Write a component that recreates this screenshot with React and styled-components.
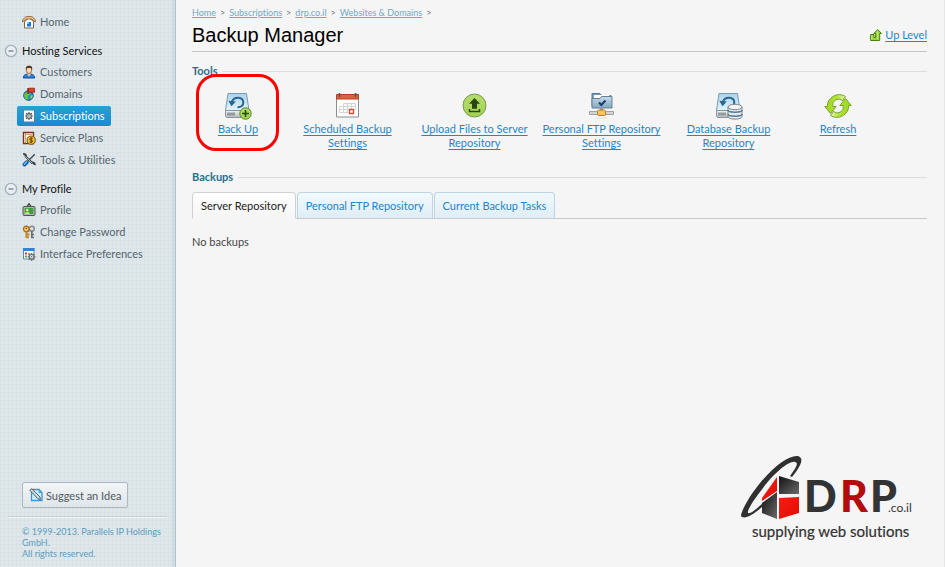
import React, { useState } from "react";
import styled, { createGlobalStyle } from "styled-components";

const GlobalStyle = createGlobalStyle`
  * {
    box-sizing: border-box;
  }

  body {
    margin: 0;
    background: #f5f5f5;
    color: #444;
    font-family: "Lato", "Liberation Sans", sans-serif;
    font-size: 11px;
    font-variant-ligatures: none;
    line-height: 14px;
  }

  button {
    font-family: inherit;
    font-size: 11px;
    cursor: pointer;
  }
`;

const Page = styled.div`
  display: flex;
  min-height: 100vh;
  border-right: 1px solid #e6e6e6;
`;

const Sidebar = styled.aside`
  display: flex;
  flex-direction: column;
  flex: 0 0 176px;
  border-right: 1px solid #b3c1c9;
  background-color: #dfe7ea;
  background-image:
    linear-gradient(to right, rgba(190, 204, 212, 0) 97%, rgba(180, 196, 205, 0.4)),
    repeating-linear-gradient(to right, rgba(190, 206, 214, 0.16) 0 1px, transparent 1px 4px),
    repeating-linear-gradient(to bottom, rgba(190, 206, 214, 0.16) 0 1px, transparent 1px 4px);
`;

const Nav = styled.nav`
  flex: 1;
  padding: 11px 8px 0 0;
`;

const NavGroup = styled.section`
  margin-bottom: 8px;
`;

const NavHeader = styled.h2`
  display: flex;
  align-items: center;
  gap: 4px;
  height: 20px;
  margin: 0;
  padding-left: 4px;
  color: #111;
  font-size: 11px;
  font-weight: 400;
`;

const Toggle = styled.button`
  display: flex;
  padding: 0;
  border: 0;
  background: none;
`;

const NavList = styled.ul`
  margin: 0;
  padding: 0 0 0 17px;
  list-style: none;
`;

const NavItem = styled.li`
  display: flex;
  height: 22px;
  align-items: center;
`;

const NavLink = styled.a`
  display: flex;
  align-items: center;
  gap: 4px;
  height: 20px;
  padding: 0 6px 0 5px;
  border-radius: 2px;
  background: ${(props) => (props.$active ? "linear-gradient(#27a0d8, #1a8cc8)" : "none")};
  color: ${(props) => (props.$active ? "#fff" : "#56656f")};
  text-decoration: none;
`;

const SidebarBottom = styled.footer`
  padding: 0 8px 8px;
  color: #5c9cbf;
  font-size: 9px;
  line-height: 11px;
`;

const SuggestButton = styled.button`
  display: flex;
  align-items: center;
  gap: 3px;
  height: 26px;
  margin: 0 0 8px 14px;
  padding: 0 6px;
  border: 1px solid #aeb9bf;
  border-radius: 2px;
  background: linear-gradient(#f2f5f7, #dfe5e9);
  color: #505a61;
`;

const Copyright = styled.p`
  margin: 0;
  padding: 9px 0 0 14px;
  border-top: 1px solid #c3cfd5;
  box-shadow: inset 0 1px #f0f4f6;
`;

const Main = styled.main`
  display: flex;
  flex-direction: column;
  flex: 1;
  padding: 7px 17px 24px 16px;
`;

const Breadcrumbs = styled.nav`
  display: flex;
  gap: 4px;
  color: #777;
  font-size: 9px;
  line-height: 12px;

  a {
    color: #71a9c4;
  }
`;

const TitleBar = styled.header`
  display: flex;
  align-items: center;
  justify-content: space-between;
  height: 33px;
  border-bottom: 1px solid #c6c6c6;
`;

const Title = styled.h1`
  margin: 0;
  color: #000;
  font-family: "Liberation Sans", sans-serif;
  font-size: 20px;
  font-weight: 400;
  line-height: 24px;
`;

const UpLevel = styled.a`
  display: flex;
  align-items: center;
  gap: 3px;
  color: #2585c7;
  text-underline-offset: 2px;
`;

const Section = styled.section`
  margin-top: ${(props) => props.$gap};
`;

const SectionTitle = styled.h2`
  display: flex;
  align-items: center;
  gap: 5px;
  margin: 0;
  color: #2a6e91;
  font-size: 11px;
  font-weight: 700;
  line-height: 14px;

  &::after {
    content: "";
    flex: 1;
    border-top: 1px solid #dcdfe0;
  }
`;

const ToolList = styled.div`
  display: flex;
  flex-wrap: wrap;
  margin-top: 14px;
`;

const Tool = styled.a`
  position: relative;
  display: flex;
  flex-direction: column;
  align-items: center;
  gap: 2px;
  width: ${(props) => (props.$narrow ? "92px" : "127px")};
  padding: 0 3px;
  color: #2585c7;
  text-align: center;
  text-underline-offset: 2px;
`;

const Highlight = styled.span`
  position: absolute;
  top: -18px;
  left: 4px;
  width: 83px;
  height: 77px;
  border: 3px solid #f00;
  border-radius: 20px;
`;

const Tabs = styled.div`
  display: flex;
  gap: 1px;
  margin-top: 8px;
  border-bottom: 1px solid #c6cacc;
`;

const Tab = styled.button`
  height: 27px;
  margin-bottom: -1px;
  padding: 0 8px;
  border: 1px solid ${(props) => (props.$active ? "#cfd2d3" : "#bdd5e2")};
  border-bottom-color: ${(props) => (props.$active ? "#f5f5f5" : "#c6cacc")};
  border-radius: 4px 4px 0 0;
  background: ${(props) => (props.$active ? "linear-gradient(#fff, #f5f5f5)" : "linear-gradient(#f1f9fe, #e0edf5)")};
  color: ${(props) => (props.$active ? "#222" : "#2585c7")};
`;

const Empty = styled.p`
  margin: 16px 0 0;
`;

const Brand = styled.svg`
  align-self: flex-end;
  margin: auto 8px 0 0;
`;

const SmallIcon = ({ children }) => (
  <svg width="14" height="14" viewBox="0 0 14 14" fill="none" aria-hidden="true">
    {children}
  </svg>
);

const HomeIcon = () => (
  <SmallIcon>
    <path d="M2.500 6.500V13h9V6.500L7 3z" fill="#fff" stroke="#756653" />
    <path d="M.7 7V4.700L4.200 1.500h5.600l3.500 3.200V7L9.500 4h-5z" fill="#edc28c" stroke="#91653b" strokeWidth=".9" />
    <path d="M5 7h4v4.500H5z" fill="#1677e5" />
    <path d="M5 7h2v2H5z" fill="#82c4ff" />
  </SmallIcon>
);

const CustomerIcon = () => (
  <SmallIcon>
    <path d="M1.300 13c0-2.500 1.500-3.500 3.700-4h4c2.200.5 3.700 1.500 3.700 4z" fill="#2d7fdb" stroke="#164b94" />
    <path d="M5.500 8h3v2L7 11.500 5.500 10z" fill="#f3cba5" />
    <ellipse cx="7" cy="5" rx="2.700" ry="3.500" fill="#f9d8b5" stroke="#754623" strokeWidth=".7" />
    <path d="M4 5C3.300 1.800 5 .6 7.200.7 10 .7 10.700 2.500 10 5L9 3H5z" fill="#56321f" />
  </SmallIcon>
);

const DomainIcon = () => (
  <SmallIcon>
    <circle cx="6.500" cy="8.500" r="4.800" fill="#2484d1" stroke="#164b80" />
    <path d="M2 7.500l2.500-2.700 3 1 .5 2-2 1.500.8 2.500-2 1C3 12.500 2 10 2 7.500z" fill="#58c941" />
    <path d="M8.500 9l2-1.500v3l-2 1.800z" fill="#84df57" />
    <path d="M6 7V1" stroke="#702510" strokeWidth="1.300" />
    <path d="M6.500 1.200h6v4h-6z" fill="#df402a" stroke="#9a2012" strokeWidth=".8" />
  </SmallIcon>
);

const GearShape = ({ x, y, color }) => (
  <g transform={`translate(${x} ${y})`} stroke={color}>
    <circle r="2.300" fill="#eee" strokeWidth="1.200" />
    <circle r=".8" fill={color} stroke="none" />
    <path d="M0-2.800V-3.900M0 2.800V3.900M-2.800 0H-3.900M2.800 0H3.900M-2-2l-.8-.8M2-2l.8-.8M-2 2l-.8.8M2 2l.8.8" strokeWidth="1.200" />
  </g>
);

const SubscriptionIcon = () => (
  <SmallIcon>
    <path d="M1.500 1h11v12h-11z" fill="#f5f7f8" stroke="#4f84a8" />
    <GearShape x={7} y={7} color="#565c62" />
  </SmallIcon>
);

const PlanIcon = () => (
  <SmallIcon>
    <path d="M1.500 1.500h10v11h-10z" fill="#fff5df" stroke="#733719" strokeWidth="1.400" />
    <path d="M3.500 2v10M3.500 3.500h7" stroke="#bf9370" strokeWidth=".8" />
    <circle cx="9.200" cy="9.200" r="4.100" fill="#f4bf2c" stroke="#755019" />
    <path d="M10.800 7.500c-2-1-3.200-.3-3.100.6.1 1.300 3 .8 3 2.100 0 1.100-1.500 1.500-3.200.6M9.200 6.400v5.600" stroke="#5d3910" />
  </SmallIcon>
);

const ToolsIcon = () => (
  <SmallIcon>
    <path d="M12.800 1.200L5 9" stroke="#444" strokeWidth="1.300" />
    <path d="M1.200 1.200c1.400-.4 3 .7 2.700 2.500l6 6c1.600-.4 3 .8 2.800 2.500" stroke="#3e464b" strokeWidth="2.200" />
    <path d="M3.300 3.300l7 7" stroke="#d7dde0" strokeWidth=".7" />
    <path d="M4.700 9.300L2.500 11.500" stroke="#1a5fae" strokeWidth="4" strokeLinecap="round" />
    <path d="M4.500 9.100L2.300 11.200" stroke="#68b8f3" strokeWidth="1.500" strokeLinecap="round" />
  </SmallIcon>
);

const ProfileIcon = () => (
  <SmallIcon>
    <path d="M5 3.500L7 .7l2 2.800" stroke="#444" strokeWidth="1.300" />
    <rect x="1" y="3.500" width="12" height="9" rx="1" fill="#b0b8ac" stroke="#4b5948" />
    <path d="M2.700 5h8.600v6H2.700z" fill="#35a342" />
    <circle cx="5.300" cy="7" r="1.300" fill="#ffe7aa" />
    <path d="M3 11c.2-3 4.300-3 4.700 0z" fill="#a9ed75" />
  </SmallIcon>
);

const KeysIcon = () => (
  <SmallIcon>
    <circle cx="9.800" cy="3.800" r="2.500" fill="#ddd" stroke="#85898c" strokeWidth="1.400" />
    <path d="M9.800 6v7M9.500 9.500H12M9.500 12.500H12" stroke="#686c70" strokeWidth="1.600" />
    <circle cx="4.300" cy="4" r="2.800" fill="#ffd37a" stroke="#ad6d16" strokeWidth="1.400" />
    <circle cx="4.300" cy="3.500" r=".8" fill="#6a3d04" />
    <path d="M4.500 6.500V13M4.500 9.500h3M4.500 12.200h2.500" stroke="#c58425" strokeWidth="2" />
  </SmallIcon>
);

const InterfaceIcon = () => (
  <SmallIcon>
    <path d="M1.500 1.500h10.500v10.500H1.500z" fill="#fff" stroke="#5b88ac" />
    <path d="M1 1h11.500v3H1z" fill="#3583d0" />
    <path d="M3 5.500h2v2H3z" fill="#dd382a" />
    <path d="M6 5.500h2v2H6z" fill="#e8ad22" />
    <path d="M3 8.500h2v2H3z" fill="#41ad3e" />
    <circle cx="9.600" cy="9.800" r="3.600" fill="#b9bfc3" />
    <GearShape x={9.6} y={9.8} color="#60686e" />
  </SmallIcon>
);

const IdeaIcon = () => (
  <svg width="14" height="14" viewBox="0 0 14 14" fill="none" aria-hidden="true">
    <path d="M2.500 1.500h7.500l3 3v8h-10.500z" fill="#d2effc" stroke="#3e97cc" strokeWidth="1.300" />
    <path d="M10 1.500v3h3" stroke="#3e97cc" />
    <path d="M.8 2.200l2-1.400 8.200 8.200.4 2.500-2.500-.7z" fill="#d5d8d9" stroke="#4c5357" strokeWidth=".9" />
  </svg>
);

const CollapseIcon = () => (
  <svg width="14" height="14" viewBox="0 0 14 14" fill="none" aria-hidden="true">
    <circle cx="7" cy="7" r="5.600" fill="#e8eef1" stroke="#a5b3ba" strokeWidth="1.400" />
    <path d="M4.500 7h5" stroke="#69767e" strokeWidth="1.200" />
  </svg>
);

const UpIcon = () => (
  <svg width="12" height="12" viewBox="0 0 12 12" aria-hidden="true">
    <path d="M.6 5.500H4V8.500h1.700V4.500H3.800L7.700.6l3.800 3.900H9.700v7H.6z" fill="#9ad438" stroke="#4c7d14" />
    <path d="M1.700 6.500v4M7.700 2v8" fill="none" stroke="#c9ed83" />
  </svg>
);

const DiskShape = () => (
  <>
    <path d="M4 1.500h18.500l2.500 17H1.500z" fill="url(#diskTop)" stroke="#789bb1" />
    <path d="M1.500 18.500H25v5.300c0 1-.6 1.700-1.500 1.700H3c-.9 0-1.500-.6-1.500-1.700z" fill="url(#diskFront)" stroke="#8a9499" />
    <path d="M4 20.500v3M6 20.500v3M8 20.500v3M10 20.500v3" stroke="#566067" />
    <path d="M8 9.500c2.300-5.400 11-4.800 11.300.7.200 3.300-2.500 5.300-5.800 5.100" fill="none" stroke="#28658f" strokeWidth="2" />
    <path d="M4.300 8.800l7.500.7-4.300 4.700z" fill="#28658f" />
  </>
);

const Gradients = () => (
  <svg width="0" height="0" style={{ position: "absolute" }} aria-hidden="true">
    <defs>
      <linearGradient id="diskTop" x2="0" y2="1">
        <stop stopColor="#a9d3ec" />
        <stop offset="1" stopColor="#e4f4fc" />
      </linearGradient>
      <linearGradient id="diskFront" x2="0" y2="1">
        <stop stopColor="#f2f2f2" />
        <stop offset="1" stopColor="#b3babd" />
      </linearGradient>
      <linearGradient id="green" x2="0" y2="1">
        <stop stopColor="#b5dc70" />
        <stop offset="1" stopColor="#a2d450" />
      </linearGradient>
      <linearGradient id="folder" x2="0" y2="1">
        <stop stopColor="#c4daea" />
        <stop offset="1" stopColor="#86a8c1" />
      </linearGradient>
      <linearGradient id="arrowFade" x2="1" y2="0">
        <stop stopColor="#9bd61c" />
        <stop offset=".6" stopColor="#b3e236" />
        <stop offset="1" stopColor="#e6f6bd" />
      </linearGradient>
      <linearGradient id="cubeBlack" x2="1" y2="1">
        <stop stopColor="#111" />
        <stop offset="1" stopColor="#6a6a6a" />
      </linearGradient>
      <linearGradient id="cubeRed" x2="1" y2="1">
        <stop stopColor="#fa1c13" />
        <stop offset="1" stopColor="#e00c06" />
      </linearGradient>
    </defs>
  </svg>
);

const ToolIcon = ({ children }) => (
  <svg width="28" height="28" viewBox="0 0 28 28" fill="none" aria-hidden="true">
    {children}
  </svg>
);

const BackupIcon = () => (
  <ToolIcon>
    <DiskShape />
    <circle cx="21.500" cy="21.500" r="5.700" fill="url(#green)" stroke="#578421" />
    <path d="M21.500 18v7M18 21.500h7" stroke="#294d0a" strokeWidth="1.700" />
  </ToolIcon>
);

const CalendarIcon = () => (
  <ToolIcon>
    <path d="M2.500 5h22v20h-22z" fill="#fff" stroke="#8c8e8f" />
    <path d="M2.500 2.500h22v4.500h-22z" fill="#df6040" stroke="#ae4026" />
    <path d="M5.500 1v4M21.500 1v4" stroke="#72463a" strokeWidth="1.500" />
    <path d="M9.500 11.500h12M5.500 14.500h16M5.500 17.500h16M5.500 20.500h12M5.500 14.500v6M9.500 11.500v9M13.500 11.500v9M17.500 11.500v9M21.500 11.500v6" stroke="#d3d6d7" />
    <path d="M15.500 17.500h4v4h-4z" fill="#fff" stroke="#d44b31" strokeWidth="1.300" />
  </ToolIcon>
);

const UploadIcon = () => (
  <ToolIcon>
    <circle cx="13.500" cy="13.500" r="11.500" fill="url(#green)" stroke="#7b9a50" />
    <path d="M13.500 6L19 11.700h-3v5h-5v-5H8z" fill="#2b4414" />
    <path d="M8.500 17v2.500h10V17" stroke="#2b4414" strokeWidth="1.500" />
  </ToolIcon>
);

const FtpIcon = () => (
  <ToolIcon>
    <path d="M4 14V1.500h8l1.500 2h9.500V15z" fill="#799db7" stroke="#587990" />
    <path d="M6 3h15.500v7H6z" fill="#fff" />
    <path d="M4 6.500h8l1.500-2h10.500V16H4z" fill="url(#folder)" stroke="#628299" />
    <path d="M11 10.500l2.300 2.500L17.500 8.500" stroke="#183e6b" strokeWidth="2" />
    <path d="M13.500 16.500v4" stroke="#888" strokeWidth="3" />
    <path d="M1.500 19.500h24v3h-24z" fill="#d2d4d5" stroke="#8b9093" strokeWidth=".8" />
    <rect x="9.500" y="18" width="8" height="5.500" rx="1.500" fill="#ffc561" stroke="#be7d26" />
    <path d="M8 26h11" stroke="#ddd" />
  </ToolIcon>
);

const DatabaseIcon = () => (
  <ToolIcon>
    <DiskShape />
    <path d="M13 15v9.500c0 3.500 14 3.500 14 0V15z" fill="#e5e9eb" stroke="#7c878e" />
    <path d="M13 18c0 3 14 3 14 0M13 22c0 3 14 3 14 0" stroke="#557b95" strokeWidth="1.600" />
    <ellipse cx="20" cy="15" rx="7" ry="2.700" fill="#f4f5f6" stroke="#7c878e" />
  </ToolIcon>
);

const RefreshArrow = () => (
  <path d="M21.500 4.500A12 12 0 0 0 3.200 14.500H.8L6.500 21.500 12.200 14.500H8.800A6 6 0 0 1 18.500 8.500z" fill="url(#arrowFade)" stroke="#6d9a22" strokeWidth=".9" />
);

const RefreshIcon = () => (
  <ToolIcon>
    <RefreshArrow />
    <g transform="rotate(180 14 14)">
      <RefreshArrow />
    </g>
  </ToolIcon>
);

const BrandLogo = () => (
  <Brand width="180" height="88" viewBox="0 0 180 88" role="img" aria-label="DRP.co.il supplying web solutions">
    <path
      d="M2 61C2 56 11 40 21 28C36 10 50 0 59 1C65 3 63 10 53 22L51 21C57 13 60 8 56 7C51 5 36 17 24 33C14 46 8 55 9 58C12 59 17 54 23 49L23 52C14 60 5 65 2 61Z"
      fill="#303030"
    />
    <path d="M38 22V36L23 46V43z" fill="url(#cubeRed)" />
    <path d="M40 21l20 6v12H40z" fill="url(#cubeBlack)" />
    <path d="M38 37v27l-15-6V48z" fill="url(#cubeBlack)" />
    <path d="M40 43l20-1v16l-20 6z" fill="url(#cubeRed)" />
    <g fontFamily="Lato, sans-serif" fill="#333">
      <text x="65" y="57" fontSize="43" fontWeight="900">D</text>
      <text x="101" y="57" fontSize="43" fontWeight="900" fill="#b30c0c">R</text>
      <text x="131" y="57" fontSize="43" fontWeight="900">P</text>
      <text x="149" y="57" fontSize="12">.co.il</text>
      <text x="13" y="82" fontSize="15" stroke="#333" strokeWidth=".2">supplying web solutions</text>
    </g>
  </Brand>
);

const hostingLinks = [
  { label: "Customers", Icon: CustomerIcon },
  { label: "Domains", Icon: DomainIcon },
  { label: "Subscriptions", Icon: SubscriptionIcon, active: true },
  { label: "Service Plans", Icon: PlanIcon },
  { label: "Tools & Utilities", Icon: ToolsIcon },
];

const profileLinks = [
  { label: "Profile", Icon: ProfileIcon },
  { label: "Change Password", Icon: KeysIcon },
  { label: "Interface Preferences", Icon: InterfaceIcon },
];

const tools = [
  { label: "Back Up", Icon: BackupIcon, narrow: true, highlight: true },
  { label: "Scheduled Backup Settings", Icon: CalendarIcon },
  { label: "Upload Files to Server Repository", Icon: UploadIcon },
  { label: "Personal FTP Repository Settings", Icon: FtpIcon },
  { label: "Database Backup Repository", Icon: DatabaseIcon },
  { label: "Refresh", Icon: RefreshIcon, narrow: true },
];

const crumbs = ["Home", "Subscriptions", "drp.co.il", "Websites & Domains"];
const tabs = ["Server Repository", "Personal FTP Repository", "Current Backup Tasks"];

function NavLinks({ links }) {
  return (
    <NavList>
      {links.map(({ label, Icon, active }) => (
        <NavItem key={label}>
          <NavLink href="#" $active={active}>
            <Icon />
            {label}
          </NavLink>
        </NavItem>
      ))}
    </NavList>
  );
}

function CollapsibleGroup({ title, links }) {
  const [open, setOpen] = useState(true);

  return (
    <NavGroup>
      <NavHeader>
        <Toggle aria-label={title} aria-expanded={open} onClick={() => setOpen(!open)}>
          <CollapseIcon />
        </Toggle>
        {title}
      </NavHeader>
      {open && <NavLinks links={links} />}
    </NavGroup>
  );
}

function App() {
  const [activeTab, setActiveTab] = useState(tabs[0]);

  return (
    <>
      <GlobalStyle />
      <Gradients />
      <Page>
        <Sidebar>
          <Nav>
            <NavGroup>
              <NavLinks links={[{ label: "Home", Icon: HomeIcon }]} />
            </NavGroup>
            <CollapsibleGroup title="Hosting Services" links={hostingLinks} />
            <CollapsibleGroup title="My Profile" links={profileLinks} />
          </Nav>
          <SidebarBottom>
            <SuggestButton>
              <IdeaIcon />
              Suggest an Idea
            </SuggestButton>
            <Copyright>
              © 1999-2013. Parallels IP Holdings GmbH.
              <br />
              All rights reserved.
            </Copyright>
          </SidebarBottom>
        </Sidebar>

        <Main>
          <Breadcrumbs>
            {crumbs.map((crumb) => (
              <React.Fragment key={crumb}>
                <a href="#">{crumb}</a>
                <span>&gt;</span>
              </React.Fragment>
            ))}
          </Breadcrumbs>
          <TitleBar>
            <Title>Backup Manager</Title>
            <UpLevel href="#">
              <UpIcon />
              Up Level
            </UpLevel>
          </TitleBar>

          <Section $gap="12px">
            <SectionTitle>Tools</SectionTitle>
            <ToolList>
              {tools.map(({ label, Icon, narrow, highlight }) => (
                <Tool key={label} href="#" $narrow={narrow}>
                  {highlight && <Highlight />}
                  <Icon />
                  {label}
                </Tool>
              ))}
            </ToolList>
          </Section>

          <Section $gap="20px">
            <SectionTitle>Backups</SectionTitle>
            <Tabs role="tablist">
              {tabs.map((tab) => (
                <Tab
                  key={tab}
                  role="tab"
                  aria-selected={tab === activeTab}
                  $active={tab === activeTab}
                  onClick={() => setActiveTab(tab)}
                >
                  {tab}
                </Tab>
              ))}
            </Tabs>
            <Empty>No backups</Empty>
          </Section>

          <BrandLogo />
        </Main>
      </Page>
    </>
  );
}

export default App;
